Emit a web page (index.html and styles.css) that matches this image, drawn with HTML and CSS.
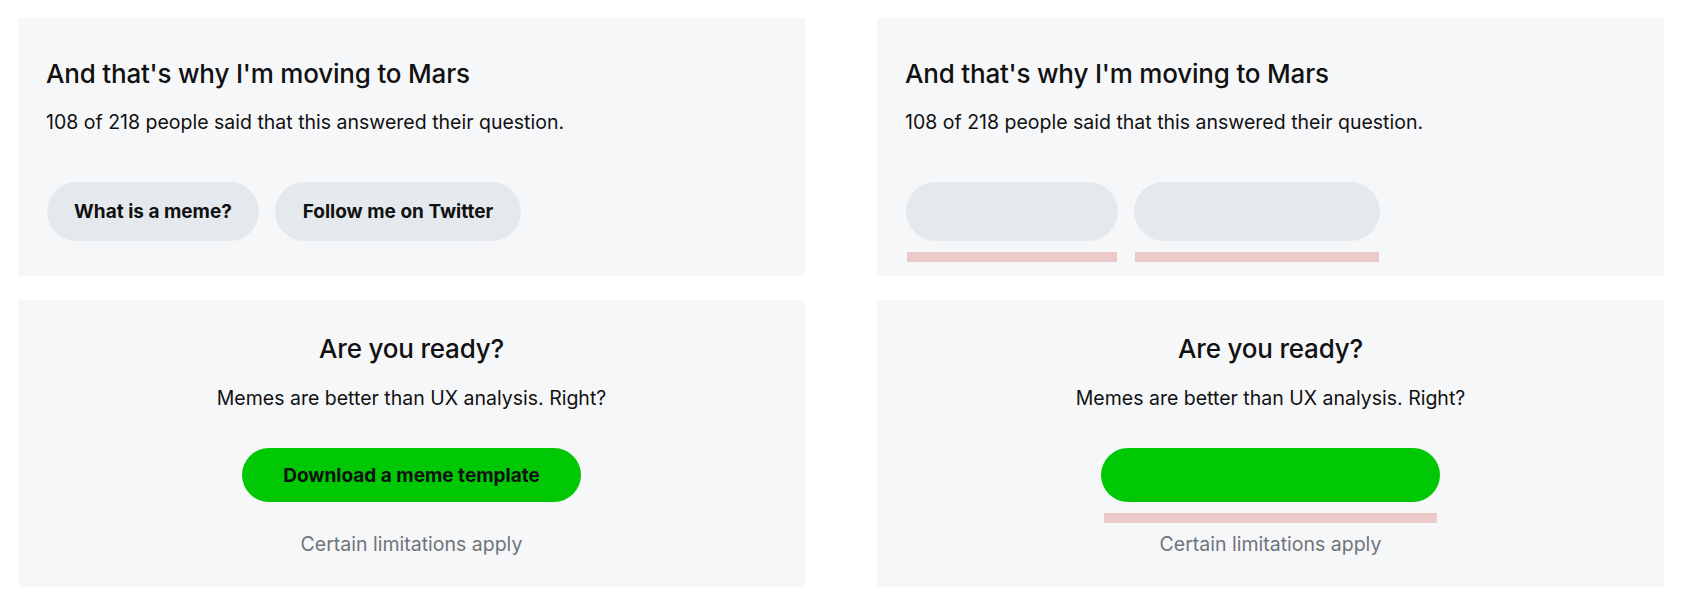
FILE: index.html
```html
<!DOCTYPE html>
<html lang="en">
<head>
    <meta charset="UTF-8">
    <title>Help answer states</title>
    <link rel="stylesheet" href="styles.css">
</head>
<body>
    <div class="board">
        <!-- Réponse avec liens -->
        <section class="card card-answer">
            <h2 class="card-title">And that's why I'm moving to Mars</h2>
            <p class="card-text">108 of 218 people said that this answered their question.</p>
            <div class="chip-row">
                <button class="chip chip-meme">What is a meme?</button>
                <button class="chip chip-twitter">Follow me on Twitter</button>
            </div>
        </section>

        <section class="card card-answer">
            <h2 class="card-title">And that's why I'm moving to Mars</h2>
            <p class="card-text">108 of 218 people said that this answered their question.</p>
            <div class="chip-row">
                <div class="slot">
                    <button class="chip chip-meme" aria-label="What is a meme?"></button>
                    <span class="mark mark-chip"></span>
                </div>
                <div class="slot">
                    <button class="chip chip-twitter" aria-label="Follow me on Twitter"></button>
                    <span class="mark mark-chip"></span>
                </div>
            </div>
        </section>

        <!-- Appel à l'action -->
        <section class="card card-cta">
            <h2 class="card-title">Are you ready?</h2>
            <p class="card-text">Memes are better than UX analysis. Right?</p>
            <button class="cta">Download a meme template</button>
            <p class="card-note">Certain limitations apply</p>
        </section>

        <section class="card card-cta">
            <h2 class="card-title">Are you ready?</h2>
            <p class="card-text">Memes are better than UX analysis. Right?</p>
            <div class="slot">
                <button class="cta" aria-label="Download a meme template"></button>
                <span class="mark mark-cta"></span>
            </div>
            <p class="card-note">Certain limitations apply</p>
        </section>
    </div>
</body>
</html>
```

FILE: styles.css
```css
* {
    box-sizing: border-box;
    font-family: Inter, 'Noto Sans', sans-serif;
}
body {
    margin: 0;
    background: #fff;
    color: #111;
}
.board {
    display: grid;
    grid-template-columns: 787px 787px;
    grid-template-rows: 258px 287px;
    column-gap: 72px;
    row-gap: 24px;
    padding: 18px 0 0 18px;
}
.card {
    background-color: #f6f7f9;
    padding: 40px 28px 0;
}
.card-cta {
    display: flex;
    flex-direction: column;
    align-items: center;
    padding-top: 33px;
}
.card-title {
    margin: 0;
    font-size: 26px;
    line-height: 32px;
    font-weight: 500;
    letter-spacing: -0.2px;
}
.card-text {
    margin: 19px 0 0;
    font-size: 19.5px;
    line-height: 26px;
}
.card-cta .card-text {
    margin-top: 20px;
}
.card-note {
    margin: 29px 0 0;
    font-size: 19.5px;
    line-height: 26px;
    color: #6f7479;
}
.chip-row {
    display: flex;
    gap: 16px;
    margin-top: 47px;
    padding-left: 1px;
}
.chip, .cta {
    border: none;
    border-radius: 999px;
    font-weight: 700;
    color: #111;
    cursor: pointer;
    display: block;
}
.chip {
    height: 59px;
    background-color: #e3e9ed;
    font-size: 19px;
}
.chip-meme { width: 212px; }
.chip-twitter { width: 246px; }
.cta {
    width: 339px;
    height: 54px;
    margin-top: 37px;
    background-color: #00c805;
    font-size: 19px;
}
.slot {
    position: relative;
}
.mark {
    position: absolute;
    top: calc(100% + 11px);
    height: 10px;
    background-color: #eccaca;
}
.mark-chip { left: 1px; right: 1px; }
.mark-cta { left: 3px; right: 3px; }
```
